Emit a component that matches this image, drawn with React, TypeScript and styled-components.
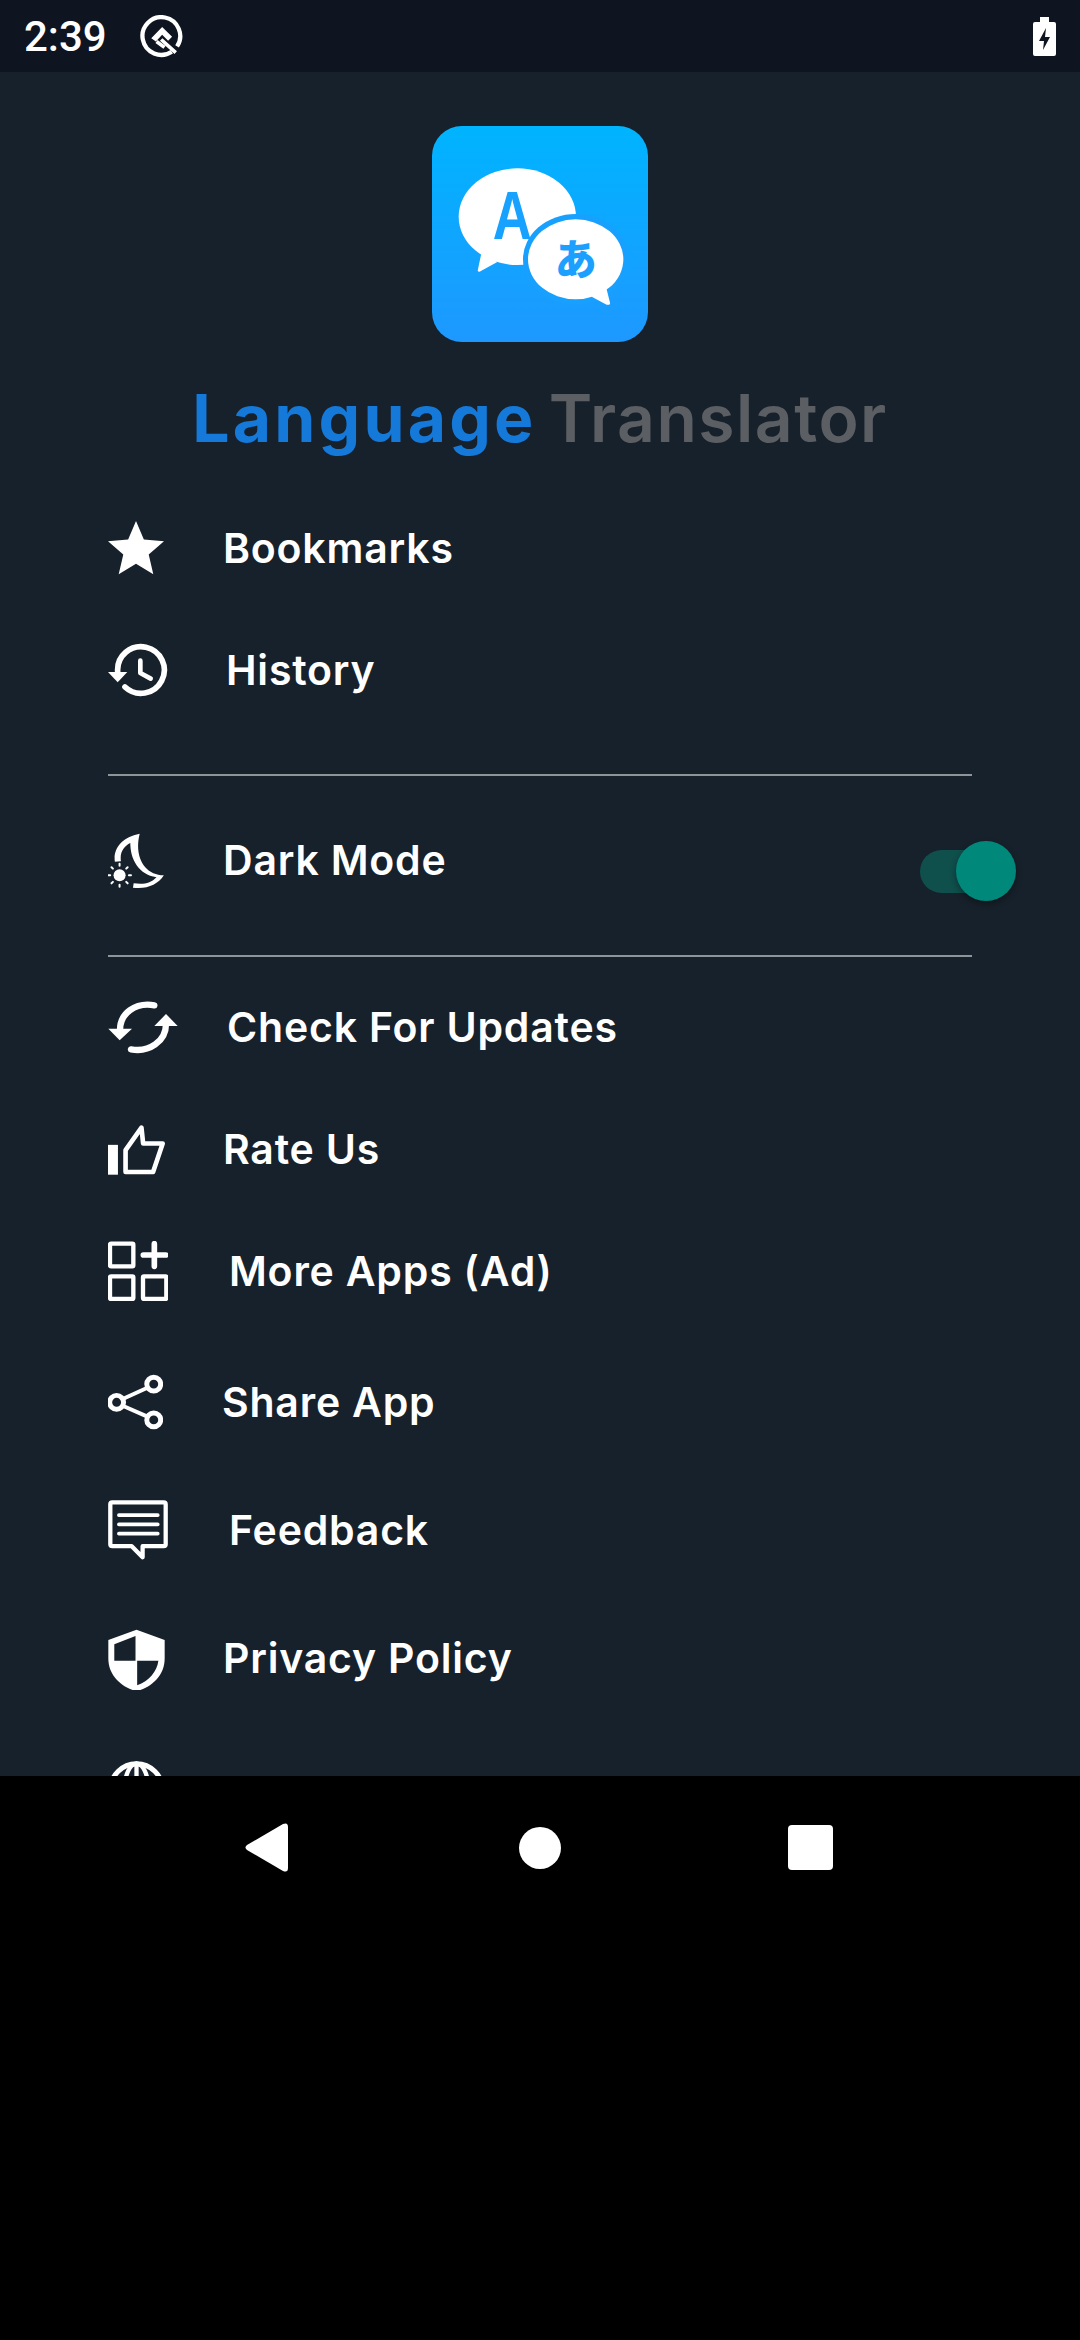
import styled, { createGlobalStyle } from "styled-components";
import type { ReactNode } from "react";

const Global = createGlobalStyle`
  html, body { margin: 0; padding: 0; background: #000; }
  * { box-sizing: border-box; }
`;

const Page = styled.div`
  width: 1080px;
  height: 2340px;
  display: flex;
  flex-direction: column;
  background: #000;
  overflow: hidden;
`;

const StatusBar = styled.div`
  height: 72px;
  flex: none;
  display: flex;
  align-items: center;
  padding: 0 24px 0 24px;
  background: #0e1520;
  color: #fff;
`;

const Time = styled.span`
  font: 500 42px "Roboto", sans-serif;
  width: 116px;
`;

const StatusRight = styled.div`
  margin-left: auto;
  display: flex;
`;

const Drawer = styled.div`
  height: 1704px;
  flex: none;
  background: #17212b;
  overflow: hidden;
`;

const Header = styled.div`
  padding-top: 54px;
  display: flex;
  flex-direction: column;
  align-items: center;
`;

const Logo = styled.div`
  width: 216px;
  height: 216px;
  border-radius: 30px;
  background: linear-gradient(180deg, #00b4ff 0%, #1e98ff 100%);
  svg { display: block; }
`;

const Title = styled.div`
  margin-top: 38px;
  height: 76px;
  line-height: 76px;
  font-family: "Inter", sans-serif;
  font-size: 66px;
  white-space: nowrap;
  display: flex;
  gap: 12px;
`;

const TitleBlue = styled.span`
  color: #1479d8;
  font-weight: 700;
  letter-spacing: 3.2px;
`;

const TitleGrey = styled.span`
  color: #5b5e62;
  font-weight: 600;
  letter-spacing: 1.5px;
`;

const Menu = styled.div`
  margin-top: 31px;
`;

const Row = styled.div<{ $h: number; $gap: number }>`
  height: ${(p) => p.$h}px;
  display: flex;
  align-items: center;
  padding: 0 64px 0 108px;
  color: #fff;
  > svg { flex: none; margin-right: ${(p) => p.$gap}px; }
`;

const Label = styled.span`
  font: 600 41px "Inter", sans-serif;
  letter-spacing: 0.8px;
  white-space: nowrap;
`;

const Divider = styled.div<{ $top: number; $bottom: number }>`
  height: 2px;
  margin: ${(p) => p.$top}px 108px ${(p) => p.$bottom}px;
  background: #8f9499;
`;

const Toggle = styled.div`
  position: relative;
  width: 96px;
  height: 43px;
  margin: 22px 0 0 auto;
  flex: none;
`;

const ToggleTrack = styled.div`
  width: 80px;
  height: 43px;
  border-radius: 22px;
  background: #0f4f4c;
`;

const ToggleThumb = styled.div`
  position: absolute;
  right: 0;
  top: -9px;
  width: 60px;
  height: 60px;
  border-radius: 50%;
  background: #00897b;
  box-shadow: 0 3px 6px rgba(0, 0, 0, 0.35);
`;

const NavBar = styled.div`
  flex: 1;
  background: #000;
  display: flex;
  align-items: flex-start;
  padding: 47px 0 0 245px;
`;

const NavBack = styled.svg`
  width: 43px;
  height: 49px;
`;

const NavHome = styled.div`
  width: 42px;
  height: 42px;
  margin: 4px 227px 0 231px;
  border-radius: 50%;
  background: #fff;
`;

const NavRecent = styled.div`
  width: 45px;
  height: 45px;
  margin-top: 2px;
  border-radius: 4px;
  background: #fff;
`;

const Icon = ({ box, w, h, children }: { box: string; w: number; h: number; children: ReactNode }) => (
  <svg viewBox={box} width={w} height={h} fill="none" stroke="#fff" strokeLinecap="round" strokeLinejoin="round">
    {children}
  </svg>
);

const sunRays = [0, 45, 90, 135, 180, 225, 270, 315];

const icons = {
  star: (
    <Icon box="2 2 20 19.27" w={56} h={54}>
      <path stroke="none" fill="#fff" d="M12 17.27L18.18 21l-1.64-7.03L22 9.24l-7.19-.61L12 2 9.19 8.63 2 9.24l5.46 4.73L5.82 21z" />
    </Icon>
  ),
  history: (
    <Icon box="84 425 180 165" w={60} h={55}>
      <path strokeWidth="17" d="M113 510A70 70 0 1 1 135 557" />
      <path stroke="none" fill="#fff" d="M84 512H142L113 543Z" />
      <path strokeWidth="14" d="M181 478V515L212 532" />
    </Icon>
  ),
  moon: (
    <Icon box="84 996 166 164" w={56} h={55}>
      <path fill="#fff" stroke="none" d="M178 998C125 1008 98 1042 104 1082L122 1080C118 1052 132 1035 150 1026C150 1075 175 1120 228 1128C212 1146 190 1150 160 1146L158 1159C200 1164 232 1150 250 1122C195 1122 160 1070 178 998Z" />
      <circle cx="118" cy="1122" r="18" stroke="none" fill="#fff" />
      {sunRays.map((a) => (
        <line key={a} x1="118" y1="1094" x2="118" y2="1088" strokeWidth="6" transform={`rotate(${a} 118 1122)`} />
      ))}
    </Icon>
  ),
  sync: (
    <Icon box="84 60 208 162" w={70} h={54}>
      <path strokeWidth="19" d="M119 150C119 100 165 66 222 76" />
      <path stroke="none" fill="#fff" d="M84 146H155L118 181Z" />
      <path strokeWidth="19" d="M257 130C258 185 205 218 152 208" />
      <path stroke="none" fill="#fff" d="M222 138H292L257 102Z" />
    </Icon>
  ),
  thumb: (
    <Icon box="84 430 172 152" w={57} h={51}>
      <rect x="84" y="492" width="30" height="90" fill="#fff" stroke="none" />
      <path strokeWidth="14" d="M137 574V508L185 440L190 488H249L220 574Z" />
    </Icon>
  ),
  apps: (
    <Icon box="84 800 180 180" w={60} h={60}>
      <rect x="90" y="808" width="70" height="68" rx="3" strokeWidth="13" />
      <path strokeWidth="17" d="M190 842H257M223 808V876" />
      <rect x="90" y="906" width="70" height="68" rx="3" strokeWidth="13" />
      <rect x="189" y="906" width="70" height="68" rx="3" strokeWidth="13" />
    </Icon>
  ),
  share: (
    <Icon box="84 110 166 168" w={55} h={56}>
      <circle cx="222" cy="140" r="21" strokeWidth="15" />
      <circle cx="110" cy="195" r="21" strokeWidth="15" />
      <circle cx="222" cy="248" r="21" strokeWidth="15" />
      <path strokeWidth="12" d="M130 184L203 151M130 206L203 238" />
    </Icon>
  ),
  feedback: (
    <Icon box="84 488 180 182" w={60} h={60}>
      <path strokeWidth="13" d="M96 495H252Q258 495 258 501V622Q258 628 252 628H188V662L155 628H96Q90 628 90 622V501Q90 495 96 495Z" />
      <path strokeWidth="11" d="M116 534H234M116 562H234M116 590H234" />
    </Icon>
  ),
  shield: (
    <Icon box="84 866 172 190" w={57} h={63}>
      <path stroke="none" fill="#fff" d="M170 874L255 905V960C255 1010 220 1045 170 1060C120 1045 85 1010 85 960V905Z" />
      <path stroke="none" fill="#17212b" d="M103 918L167 893V968H103ZM172 968H236C232 1000 208 1030 172 1042Z" />
    </Icon>
  ),
  globe: (
    <Icon box="84 1262 172 172" w={57} h={57}>
      <circle cx="170" cy="1348" r="78" strokeWidth="15" />
      <ellipse cx="170" cy="1348" rx="36" ry="78" strokeWidth="13" />
      <path strokeWidth="13" d="M170 1270V1426" />
    </Icon>
  ),
};

export default function App() {
  return (
    <Page>
      <Global />
      <StatusBar>
        <Time>2:39</Time>
        <svg viewBox="418 42 130 130" width="43" height="43" fill="none" stroke="#fff">
          <path strokeWidth="13" d="M514 153A57 57 0 1 1 530 137" />
          <path stroke="none" fill="#fff" d="M452 112L485 78L515 108L503 120L485 102L466 122Z" />
          <path strokeWidth="11" d="M482 116L526 156M468 122L492 140" />
        </svg>
        <StatusRight>
          <svg viewBox="0 0 23 39" width="23" height="39">
            <path fill="#fff" d="M7 0H16V5H21Q23 5 23 7V37Q23 39 21 39H2Q0 39 0 37V7Q0 5 2 5H7Z" />
            <path fill="#0e1520" d="M13 11L6 24H11L10 33L17 20H12Z" />
          </svg>
        </StatusRight>
      </StatusBar>
      <Drawer>
        <Header>
          <Logo>
            <svg viewBox="66 48 648 648" width="216" height="216">
              <ellipse cx="322" cy="320" rx="176" ry="145" fill="#fff" />
              <path fill="#fff" d="M214 430L203 482Q206 488 214 482L262 456Z" />
              <text transform="translate(307 387) scale(0.78 1)" textAnchor="middle" fontFamily="Liberation Sans, sans-serif" fontWeight="700" fontSize="208" fill="#17a2ff">A</text>
              <ellipse cx="497" cy="448" rx="158" ry="136" fill="#18a0ff" />
              <ellipse cx="497" cy="448" rx="143" ry="120" fill="#fff" />
              <path fill="#fff" d="M545 560L590 584Q602 586 600 578L588 530Z" />
              <text x="497" y="496" textAnchor="middle" fontFamily="Noto Sans CJK JP, sans-serif" fontWeight="900" fontSize="126" fill="#1ba0ff">あ</text>
            </svg>
          </Logo>
          <Title>
            <TitleBlue>Language</TitleBlue>
            <TitleGrey>Translator</TitleGrey>
          </Title>
        </Header>
        <Menu>
          <Row $h={122} $gap={59}>{icons.star}<Label>Bookmarks</Label></Row>
          <Row $h={122} $gap={58}>{icons.history}<Label>History</Label></Row>
          <Divider $top={43} $bottom={23} />
          <Row $h={122} $gap={59}>{icons.moon}<Label>Dark Mode</Label><Toggle><ToggleTrack /><ToggleThumb /></Toggle></Row>
          <Divider $top={34} $bottom={9} />
          <Row $h={122} $gap={49}>{icons.sync}<Label>Check For Updates</Label></Row>
          <Row $h={122} $gap={58}>{icons.thumb}<Label>Rate Us</Label></Row>
          <Row $h={122} $gap={61}>{icons.apps}<Label>More Apps (Ad)</Label></Row>
          <Row $h={140} $gap={59}>{icons.share}<Label>Share App</Label></Row>
          <Row $h={116} $gap={61}>{icons.feedback}<Label>Feedback</Label></Row>
          <Row $h={140} $gap={58}>{icons.shield}<Label>Privacy Policy</Label></Row>
          <Row $h={122} $gap={58}>{icons.globe}</Row>
        </Menu>
      </Drawer>
      <NavBar>
        <NavBack viewBox="0 0 43 49">
          <path fill="#fff" d="M38 1Q43 -1 43 4V45Q43 50 38 48L2 27Q-1 24.5 2 22Z" />
        </NavBack>
        <NavHome />
        <NavRecent />
      </NavBar>
    </Page>
  );
}
